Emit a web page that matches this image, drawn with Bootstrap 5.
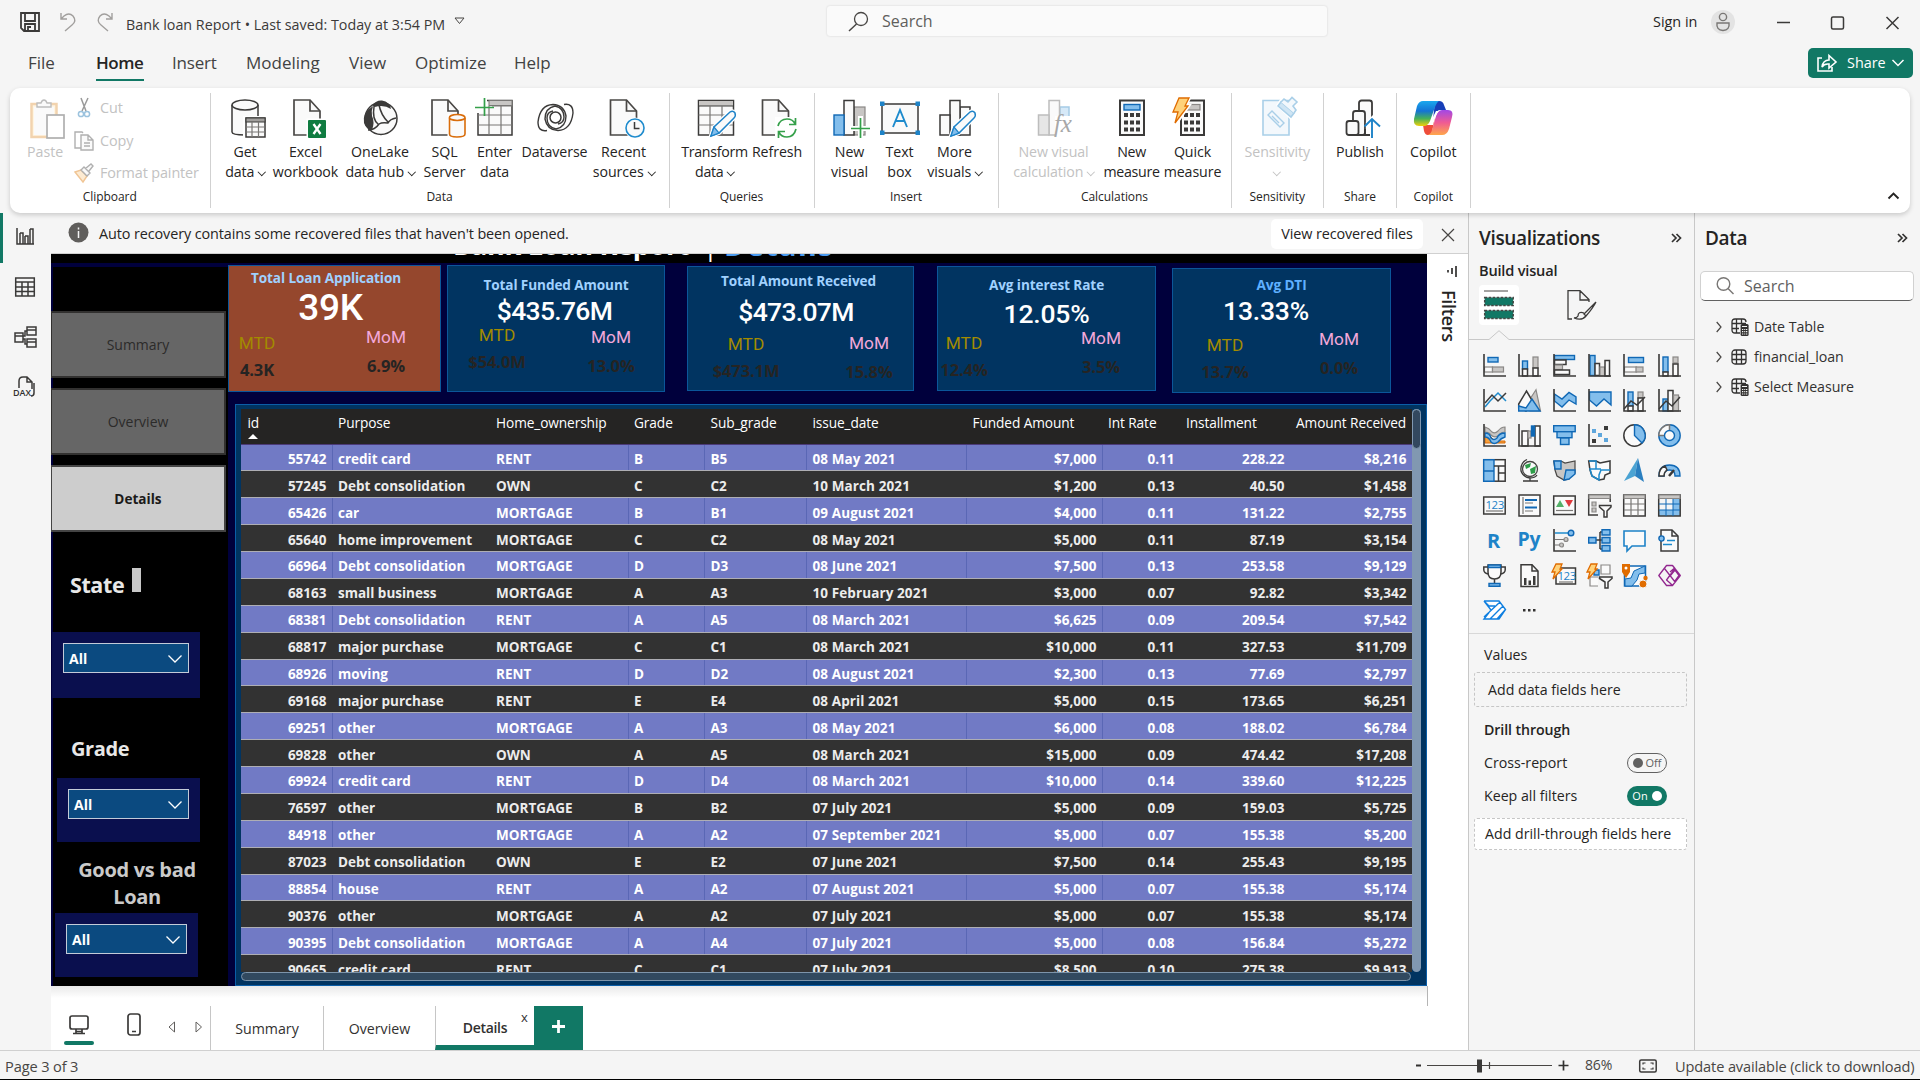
<!DOCTYPE html>
<html lang="en">
<head>
<meta charset="utf-8">
<meta name="viewport" content="width=device-width, initial-scale=1">
<title>Bank loan Report</title>
<link href="https://cdn.jsdelivr.net/npm/bootstrap@5.3.0/dist/css/bootstrap.min.css" rel="stylesheet">
<style>
:root{--green:#117865;--ink:#252423;--rule:#c8c8c8}
body{width:1920px;height:1080px;overflow:hidden;background:#f5f5f5;color:var(--ink);font-family:"Open Sans","Noto Sans",sans-serif;font-size:14.4px;line-height:20px;white-space:nowrap}
svg{display:block;overflow:visible;flex:none}
/* icon strokes and fills */
.k{fill:none;stroke:#3b3a39;stroke-width:1.5}
.w{fill:#fafafa;stroke:#3b3a39;stroke-width:1.5}
.b{fill:#83beec;stroke:#1068b5;stroke-width:1.4}
.bl{fill:none;stroke:#1e8bcd;stroke-width:1.5}
.g{fill:#c8c6c4;stroke:#8a8886;stroke-width:1.2}
.gl{fill:none;stroke:#797775;stroke-width:1.2}
.wg{fill:#fafafa;stroke:#8a8886;stroke-width:1.2}
.gr{fill:none;stroke:#35a04a;stroke-width:1.7}
.or{fill:#fafafa;stroke:#d96d0b;stroke-width:1.6}
.bolt{fill:#ffd27a;stroke:#e06c00;stroke-width:1.3}
.dk{fill:#3b3a39}
/* title bar */
.titlebar{height:44px}
.tb-left{width:827px;padding-left:20px}
.tb-search{width:500px;height:30px;margin-top:6px;background:#fafafa;border-radius:3px;box-shadow:0 0 2px #cfcfcf;color:#605e5c;font-size:16px;padding-left:21px}
.doc-title{font-size:14.3px;margin-left:12px;margin-top:5px;color:#3b3a39}
.avatar{width:24px;height:24px;background:#e3e3e3}
.menubar{height:44px;font-size:17px;color:#424242}
.menubar .nav-link{padding:0;color:#424242;line-height:24px;height:36px;margin-top:7px}
.menubar .nav-link.active{color:var(--ink);font-weight:600;border-bottom:2.5px solid var(--green);letter-spacing:-.45px;height:29.5px}
.share{background:var(--green);width:105px;height:30px;margin:4px 7px 0 auto;border-radius:5px;font-size:14.4px}
/* ribbon */
.ribbon{height:125px;margin:0 10px;background:#fff;border-radius:10px;box-shadow:0 2px 5px rgba(0,0,0,.18);position:relative;z-index:2}
.rgroup{border-right:1.5px solid #d1d1d1;margin:5px 0;height:115px}
.rgroup .gname{font-size:12px;line-height:16px;letter-spacing:-.05px}
.rbtns{display:grid;justify-items:center;height:96px;padding-top:5px}
.rbtns>div{text-align:center;font-size:14.2px;line-height:20px;letter-spacing:-.08px;color:var(--ink)}
.rbtns svg.ico{margin:0 auto 4px}
.off,.rbtns>div.off{color:#c2c2c2}
.cv{display:inline-block;width:5.500px;height:5.500px;border:solid currentColor;border-width:0 1.6px 1.6px 0;transform:translateY(-1px) rotate(45deg);margin-left:5px;vertical-align:middle}
.cols-data{grid-template-columns:69px 52px 97px 32px 68px 52px 86px}
.cols-q{grid-template-columns:90px 35px}
.cols-q>div:first-child,.cols-c>div:nth-child(2){letter-spacing:-.3px}
.cols-i{grid-template-columns:70px 30px 80px}
.cols-c{grid-template-columns:110px 46px 76px}
.w-clip{width:200.5px}.w-data{width:459px}.w-q{width:145px}.w-i{width:184px}.w-c{width:233px}.w-s{width:92.5px}.w-p{width:73px}.w-co{width:73.5px}
.clip-items div{height:32.5px;gap:6px;letter-spacing:-.12px}
/* left rail */
.rail{width:51px}
.rail div{height:50px;padding:0 1px 3px 0}
.rail div.active{border-left:3px solid var(--green);padding:0 4px 3px 0}
.notice{height:41px;border-bottom:1px solid #d0d0d0;font-size:14.4px;letter-spacing:-.1px;padding-top:1px}
.btn-view{background:#fff;border-radius:5px;height:30px;width:152px}
/* report canvas */
.canvas{width:1376px;height:732px;background:#00003c;overflow:hidden}
.report-title{height:9px;background:#000;color:#fff;font-weight:700;font-size:27px;line-height:37px;padding-left:402px;letter-spacing:-.25px}
.side{width:175px;margin:4px 6px 0 2px;background:#000;height:719px}
.navbtn{width:175px;height:67px;background:#666;border:2px solid #323130;border-left-width:1px;margin-left:-2px;color:#2c2b2a;font-size:14px}
.navbtn.cur{background:#cdcdcd;color:#1b1a19;font-weight:700;font-size:13.6px;border-color:#444}
.slabel{color:#e8e8e8;font-weight:700;font-size:20px;line-height:27px;letter-spacing:-.4px}
.slicer{background:#0a0f4e;padding:11px}
.slicer div{height:30px;background:#0b4a80;border:1.5px solid #c3cbd8;color:#fff;font-weight:700;font-size:14px;padding:1px 6px 0 5px}
.cursor-block{width:9px;height:24px;background:#c8c8c8}
.kpi{background:#013461;border:1.5px solid #0b5699;color:var(--ink);height:125px}
.kpi .t{color:#a0d1ff;font-weight:700;font-size:13.6px;line-height:18px;letter-spacing:-.1px;text-align:center}
.kpi .v{color:#fff;font-family:Roboto,sans-serif;font-weight:500;font-size:26.5px;line-height:32px;text-align:center;letter-spacing:-.2px}
.kpi .c{width:70px;text-align:center;font-weight:600}
.kpi .c span{display:block;font-family:Roboto,sans-serif;font-weight:400;font-size:17.3px;line-height:20px}
.kpi .c b{display:block;font-weight:700;font-size:16.5px;line-height:20px;letter-spacing:-.1px}
.mtd span{color:#a38b00}.mtd b{margin-top:7px}
.mom span{color:#f3a8d9}.mom b{margin-top:9px}
.k1{width:213px;height:127px;margin-top:2px;background:#95472d}
.k1 .t{padding:3px 17px 0 0}.k1 .v{font-size:37px;line-height:40px;padding:1px 8px 0 0;letter-spacing:-.3px}
.k1 .mtd{margin:5px 0 0 -7px}.k1 .mom{margin:-1px 19px 0 auto}
.k2{width:218px;height:127px;margin:2px 0 0 6px}
.k2 .t{padding-top:10px}.k2 .v{padding-top:1px;padding-right:3px}
.k2 .mtd{margin:-2.5px 0 0 14px}.k2 .mom{margin:0 18px 0 auto}
.k3{width:227px;margin:3px 0 0 22px}
.k3 .t{padding:5px 4px 0 0}.k3 .v{padding-top:5.500px;padding-right:9px}
.k2 .v,.k3 .v{letter-spacing:-.7px}
.k3 .mtd{margin:6px 0 0 23px}.k3 .mom{margin:5px 9px 0 auto}
.k4{width:219px;margin:3px 0 0 23px}
.k4 .t{padding-top:9px}.k4 .v{padding-top:3.500px}
.k4 .mtd{margin:3px 0 0 -9px}.k4 .mom{margin:-2px 19px 0 auto}
.k5{width:219px;margin:5px 0 0 16px}
.k5 .t{padding-top:7px;color:#5fb0ff}.k5 .v{padding-top:.5px;padding-right:31px}
.k5 .mtd{margin:8px 0 0 17px}.k5 .mom{margin:2px 16px 0 auto}
.kpis{height:141px}
.grid-visual{width:1192px;height:582px;margin-left:1px;background:#013461;border:1.5px solid #0b5ea8;padding:3.5px 0 0 5px}
.tclip{width:1170.5px;height:563px;overflow:hidden}
.loans{table-layout:fixed;width:1170.5px;border-collapse:separate;border-spacing:0;font-size:13.5px;font-weight:700;color:#fff}
.loans th{height:36px;background:#252423;font-weight:400;font-size:13.7px;vertical-align:top;padding:4px 0 0 6.500px;line-height:20px;border-bottom:1.5px solid #4b3a78;letter-spacing:-.1px}
.loans td{height:26.89px;padding:3px 5px 0 6.500px;line-height:20px;vertical-align:middle;border-bottom:1.5px solid #aeaeb4}
.loans tr:nth-child(odd) td{background:#717ac5}
.loans tr:nth-child(even) td{background:#323232;color:#ececec}
.loans tr:nth-child(odd) td:not(:nth-child(3)):not(:nth-child(10)):not(:nth-child(9)){box-shadow:inset 1px 0 #5a67b5}
.loans td:first-child{box-shadow:none!important}
.loans .n{text-align:right}
.loans td:nth-child(6){letter-spacing:.1px}
.sort{width:0;border:5px solid transparent;border-top:0;border-bottom:5px solid #fff;margin-top:1px}
.vbar{width:9.5px;height:563px;background:#8198b1;border-radius:5px}
.vbar div{height:40px;border-radius:5px;background:#33485f;border:1px solid #8198b1}
.hbar{width:1170px;height:9.5px;background:#31495f;border:1px solid #7d94aa;border-radius:5px}
/* page tabs */
.below{height:64px}
.shade{height:20px;width:1377px;background:linear-gradient(#e9e9e9,#fff 60%);border-right:1px solid #b5b5b5}
.ptabs{height:44px}
.ptab{border-left:1.5px solid #c6c6c6;font-size:14.2px;color:#323130;padding:1px 0 0 1px}
.ptab.cur{border-bottom:5px solid var(--green);padding-top:5px;font-weight:600;letter-spacing:-.3px;font-size:14px}
.filters{width:41px;background:#fff}
.filters .fl{writing-mode:vertical-rl;font-weight:600;font-size:18.3px;line-height:22px;letter-spacing:-.4px}
/* panes */
.viz{width:226px;border-left:1px solid var(--rule)}
.data-pane{width:226px;border-left:1px solid var(--rule)}
.pane-h{font-weight:600;font-size:19px;line-height:26px;letter-spacing:-.35px}
.sub-h{font-weight:600;font-size:14.6px;letter-spacing:-.2px}
.vgrid{display:grid;grid-template-columns:repeat(6,23px);gap:12px;padding:14px 0 0 14px;height:293px;align-content:start}
.drop{width:213px;margin-left:5px;border:1px dashed #c6c6c6;border-radius:3px;font-size:14.2px}
.tog{width:40px;height:20px;border-radius:10px;font-size:11px;margin-right:27px}
.tog i{width:10px;height:10px;border-radius:50%}
.dsearch{width:214px;height:30px;margin:20px 0 11px 5px;background:#fff;border:1px solid #d1d1d1;border-bottom:1.5px solid #616161;border-radius:5px;color:#616161;font-size:16px;padding-left:15px;gap:10px}
.trow{height:30px;padding-left:21px;font-size:14.2px;color:#323130;letter-spacing:-.05px}
.trow .nm{margin-left:5px}
.status{height:29px;border-top:1px solid #d0d0d0;font-size:14.6px;color:#484644;letter-spacing:-.13px}
.bottomline{height:1px;background:#000}
</style>
</head>
<body class="d-flex flex-column">
<svg width="0" height="0" class="position-absolute">
 <symbol id="doc" viewBox="0 0 40 40" overflow="visible"><path d="M1 2H17L27 13V37H1Z" fill="#fafafa" stroke="#4a4846" stroke-width="1.7"/><path d="M17 2V13H27" fill="none" stroke="#4a4846" stroke-width="1.7"/></symbol>
 <symbol id="pencil" viewBox="0 0 40 40" overflow="visible"><path d="M16 38L19 29L35 14Q39 12 40 16Q41 18 39 20L24 35Z" fill="#fff" stroke="#fff" stroke-width="4"/><path d="M16 38L19 29L35 14Q38 12 40 15Q41 18 39 20L24 35Z" fill="#fafafa" stroke="#1e83c8" stroke-width="1.5"/><path d="M16 38L19 29L24 35Z" fill="#83beec" stroke="#1e83c8" stroke-width="1.2"/></symbol>
 <symbol id="ax" viewBox="0 0 23 23" overflow="visible"><path d="M1 0V22H23" fill="none" stroke="#3b3a39" stroke-width="1.6"/></symbol>
 <symbol id="collapse" viewBox="0 0 10 10" overflow="visible"><path d="M0 1L4 5L0 9M4.500 1L8.500 5L4.500 9" fill="none" stroke="#323130" stroke-width="1.7"/></symbol>
 <symbol id="chev" viewBox="0 0 14 8" overflow="visible"><path d="M.5 .5L7 7L13.500 .5" fill="none" stroke="#fff" stroke-width="1.300"/></symbol>
 <symbol id="expand" viewBox="0 0 15 10" overflow="visible"><path d="M.7 0L5 5L.7 10" fill="none" stroke="#484644" stroke-width="1.200"/></symbol>
 <symbol id="tbl" viewBox="0 0 18 18" overflow="visible"><rect x="1" y="1" width="14" height="14" rx="3" fill="none" stroke="#323130" stroke-width="1.3"/><path d="M5.500 1V15M10.500 1V15M1 5.500H15M1 10.500H15" stroke="#323130" stroke-width="1.3"/></symbol>
 <symbol id="tblc" viewBox="0 0 18 18" overflow="visible"><path d="M9 15H4Q1 15 1 12V4Q1 1 4 1H12Q15 1 15 4M5.500 1V15M10.500 1V6M1 5.500H15M1 10.500H8" fill="none" stroke="#323130" stroke-width="1.3"/><rect x="9.600" y="6" width="8" height="12" rx="1.500" fill="#323130"/><path d="M11 8.500H16M11 11.500H12.300M13.200 11.500H14.300M15 11.500H16.300M11 13.700H12.300M13.200 13.700H14.300M15 13.700H16.300M11 16H12.300M13.200 16H14.300M15 16H16.300" stroke="#f5f5f5" stroke-width="1.200"/></symbol>
</svg>

<header class="titlebar d-flex">
 <div class="tb-left d-flex align-items-center">
  <svg width="20" height="20" viewBox="0 0 20 20" style="margin-top:-1px"><path class="k" style="stroke-width:1.8" d="M1 1H19V19H4L1 16ZM5 1V9H15V1M5 19V12H15V19M8 19V15H11"/></svg>
  <svg style="margin-left:18px" width="19" height="20" viewBox="0 0 19 20"><path d="M5 1V7H11M5 7L8 4Q13 0 17 4Q21 9 16 13L9 19" transform="translate(-2 0)" fill="none" stroke="#a19f9d" stroke-width="1.4"/></svg>
  <svg style="margin-left:18px" width="19" height="20" viewBox="0 0 19 20"><path d="M15 1V7H9M15 7L12 4Q7 0 3 4Q-1 9 4 13L11 19" transform="translate(2 0)" fill="none" stroke="#a19f9d" stroke-width="1.4"/></svg>
  <div class="doc-title">Bank loan Report • Last saved: Today at 3:54 PM</div>
  <svg style="margin:-3px 0 0 9px" width="11" height="8" viewBox="0 0 11 8"><path d="M1 1H10L5.500 6.500Z" fill="none" stroke="#484644"/></svg>
 </div>
 <div class="tb-search d-flex align-items-center">
  <svg width="21" height="21" viewBox="0 0 21 21"><circle cx="13" cy="8" r="6.500" fill="none" stroke="#484644" stroke-width="1.300"/><path d="M8.500 13L1 20" stroke="#484644" stroke-width="1.500"/></svg>
  <span style="margin-left:13px">Search</span>
 </div>
 <div class="d-flex align-items-center flex-fill" style="padding-left:326px">
  <span style="width:58px">Sign in</span>
  <span class="avatar rounded-circle d-flex justify-content-center align-items-center"><svg width="16" height="20" viewBox="0 0 16 20"><circle class="gl" cx="8" cy="5" r="3.600" style="stroke-width:1.400"/><path class="gl" style="stroke-width:1.400" d="M2 11H14Q15 18 8 18.500Q1 18 2 11Z"/></svg></span>
  <svg style="margin-left:42px" width="122" height="14" viewBox="0 0 122 14"><path class="k" d="M0 7.500H13"/><rect class="k" x="54.500" y="2" width="12" height="12" rx="1.500"/><path class="k" d="M109.500 2L121.500 14M121.500 2L109.500 14"/></svg>
 </div>
</header>

<nav class="menubar nav d-flex flex-nowrap">
 <a class="nav-link" style="margin-left:28px;width:68px">File</a><a class="nav-link active" style="width:48px">Home</a>
 <a class="nav-link" style="margin-left:28px;width:74px;letter-spacing:-.2px">Insert</a><a class="nav-link" style="width:103px">Modeling</a><a class="nav-link" style="width:66px">View</a><a class="nav-link" style="width:99px">Optimize</a><a class="nav-link">Help</a>
 <div class="share text-white d-flex align-items-center">
  <svg style="margin:0 10px 0 9px" width="20" height="18" viewBox="0 0 20 18"><path d="M5 4H1V17H15V13M5 13Q6 6 12 6V1.500L19 8L12 14V10Q7 9.500 5 13Z" fill="none" stroke="#fff" stroke-width="1.600"/></svg>Share
  <svg style="margin-left:6px" width="12" height="8" viewBox="0 0 12 8"><path d="M.5 1L6 6.500L11.500 1" fill="none" stroke="#fff" stroke-width="1.500"/></svg>
 </div>
</nav>

<section class="ribbon d-flex">
 <div class="rgroup w-clip">
  <div class="d-flex" style="height:96px">
   <div class="off" style="width:62px;padding:4px 0 0 17px;font-size:14.2px">
    <svg width="38" height="42" viewBox="0 0 38 42" style="margin-bottom:3px"><rect x="4.500" y="7" width="25" height="33" fill="#fff5e2" stroke="#f2d3ae" stroke-width="2.500"/><rect x="7" y="10" width="20" height="28" fill="#fafafa"/><path d="M10 10V6H14Q15 3 17 3Q19 3 20 6H24V10Z" fill="#fafafa" stroke="#bdbdbd" stroke-width="1.400"/><rect x="20" y="18" width="17" height="23" fill="#fff" stroke="#b0b0b0" stroke-width="1.700"/></svg>
    Paste</div>
   <div class="clip-items off flex-fill" style="padding-left:2px;margin-top:-1px">
    <div class="d-flex align-items-center"><svg width="20" height="20" viewBox="0 0 20 20"><path d="M7 0L12 13M14 0L8 13" stroke="#9a9a9a" stroke-width="1.500"/><circle cx="7" cy="16" r="2.600" fill="none" stroke="#9cc3de" stroke-width="1.500"/><circle cx="13" cy="16" r="2.600" fill="none" stroke="#9cc3de" stroke-width="1.500"/></svg>Cut</div>
    <div class="d-flex align-items-center"><svg width="20" height="20" viewBox="0 0 20 20"><path d="M7 17H1V1H8L9 2" fill="none" stroke="#b0b0b0" stroke-width="1.400"/><path d="M7 4H14L19 9V19H7ZM14 4V9H19M10 12H16M10 15H16" fill="#fafafa" stroke="#b0b0b0" stroke-width="1.400"/></svg>Copy</div>
    <div class="d-flex align-items-center"><svg width="20" height="20" viewBox="0 0 20 20"><path d="M1 9L7 7L13 13L9 19Z" fill="#fdebd2" stroke="#f0c595" stroke-width="1.400"/><path d="M7 7L10 4L16 10L13 13ZM11.500 5.500L17 1L19 3L15 8" fill="#fafafa" stroke="#b0b0b0" stroke-width="1.400"/></svg>Format painter</div>
   </div>
  </div>
  <div class="gname text-center">Clipboard</div>
 </div>

 <div class="rgroup w-data">
  <div class="rbtns cols-data">
   <div><svg class="ico" width="40" height="40" viewBox="0 0 40 40"><path class="w" d="M7 7V34Q7 37 20 37L33 34V7"/><ellipse class="w" cx="20" cy="7" rx="13" ry="5"/><rect x="18" y="18" width="24" height="22" fill="#fff"/><rect class="w" x="21" y="20" width="19" height="19"/><rect x="21" y="20" width="19" height="4" fill="#a19f9d" stroke="#3b3a39"/><path class="gl" d="M21 29H40M21 34H40M27 24V39M33.500 24V39"/></svg>Get<br>data<i class="cv"></i></div>
   <div><svg class="ico" width="40" height="40" viewBox="0 0 40 40"><use href="#doc" x="7" width="40" height="40"/><rect x="20.500" y="20.500" width="20" height="20" fill="#fff"/><rect x="22" y="22" width="18" height="18" rx="1" fill="#107c41"/><path d="M27.500 26L34.500 36M34.500 26L27.500 36" stroke="#fff" stroke-width="2.300"/></svg>Excel<br>workbook</div>
   <div><svg class="ico" width="40" height="40" viewBox="0 0 40 40"><circle cx="21" cy="20.500" r="16" fill="#fafafa" stroke="#3b3a39" stroke-width="1.500"/><path class="dk" d="M13 7Q16 2 22 2.500Q30 4 31 11Q24 6 14 9ZM13 8Q2 15 4 25Q6 31 12 32Q15 24 12 18Q11 13 13 8Z"/><path class="k" d="M14 9Q12 21 18 26M19 7Q21 17 28 24M8 32Q15 32 19 26Q22 24 28 25Q30 21 36 20M13 8L19 7"/></svg>OneLake<br>data hub<i class="cv"></i></div>
   <div><svg class="ico" width="40" height="40" viewBox="0 0 40 40"><use href="#doc" x="6" width="40" height="40"/><path fill="#fff" d="M22.500 16H42V41H22.500Z"/><path class="or" d="M24.500 20V36Q24.500 39 32 39Q40 39 40 36V20"/><ellipse class="or" cx="32.200" cy="19.500" rx="7.800" ry="3"/></svg>SQL<br>Server</div>
   <div><svg class="ico" width="40" height="40" viewBox="0 0 40 40"><rect class="w" x="3" y="2.500" width="34" height="34.500"/><rect x="14" y="2.500" width="23" height="5" fill="#c8c6c4" stroke="#797775"/><path class="gl" d="M3 17H37M3 27H37M14 8V37M26 8V37M17 8H37"/><path d="M0 0H12V15H0Z" fill="#fff"/><path class="gr" d="M9.500 0V18M0 9.500H19"/></svg>Enter<br>data</div>
   <div><svg class="ico" width="40" height="40" viewBox="0 0 40 40"><g id="swirl"><path class="k" style="stroke-width:1.400" d="M12 32.500Q3 34 3 24Q5 7 18 6.500Q29 7 31 18Q31 29 21 31Q12 29 12 20Q12 14 18 13"/></g><use href="#swirl" transform="rotate(180 20.500 19.500)"/><circle class="k" cx="20.500" cy="19.500" r="5.500"/></svg>Dataverse</div>
   <div><svg class="ico" width="40" height="40" viewBox="0 0 40 40"><use href="#doc" x="6.500" width="40" height="40"/><circle cx="32" cy="30" r="10.500" fill="#fff"/><circle cx="32" cy="30" r="9" fill="#fafafa" stroke="#1e8bcd" stroke-width="1.600"/><path class="k" d="M31.500 24V30.500H36.500"/></svg>Recent<br>sources<i class="cv"></i></div>
  </div>
  <div class="gname text-center">Data</div>
 </div>

 <div class="rgroup w-q">
  <div class="rbtns cols-q">
   <div><svg class="ico" width="40" height="40" viewBox="0 0 40 40"><rect class="w" x="3.500" y="2.500" width="35" height="34.500"/><rect x="3.500" y="2.500" width="35" height="5.500" fill="#c8c6c4" stroke="#3b3a39"/><path class="gl" d="M3.500 17H38M3.500 27H38M15 8V37M27 8V37"/><use href="#pencil" width="40" height="40"/></svg>Transform<br>data<i class="cv"></i></div>
   <div><svg class="ico" width="40" height="40" viewBox="0 0 40 40"><use href="#doc" x="4.500" width="40" height="40"/><path d="M18 19H42V42H18Z" fill="#fff"/><path class="gr" d="M21 28Q23 21 30 21Q36 21 38 26M38.500 20V26.500H32M39 31Q37 39 30 39Q24 39 22 34M21.500 40V33.500H28"/></svg>Refresh</div>
  </div>
  <div class="gname text-center">Queries</div>
 </div>

 <div class="rgroup w-i">
  <div class="rbtns cols-i">
   <div><svg class="ico" width="40" height="40" viewBox="0 0 40 40"><rect class="g" x="24" y="9" width="11" height="28"/><rect class="w" x="14" y="2.500" width="10" height="34.500"/><rect class="b" x="4" y="17" width="10" height="20"/><path d="M30.500 18V40M20 30.500H40" stroke="#fff" stroke-width="5"/><path class="gr" d="M30.500 20V40M21 30.500H40"/></svg>New<br>visual</div>
   <div><svg class="ico" width="40" height="40" viewBox="0 0 40 40"><rect class="w" x="2" y="6" width="36" height="29"/><path d="M0 3.500H4.500V8H0ZM35.500 3.500H40V8H35.500ZM0 32.500H4.500V37H0ZM35.500 32.500H40V37H35.500Z" fill="#1e83c8"/><path class="bl" style="stroke-width:1.900" d="M13 29L20 12L27 29M15.500 23H24.500"/></svg>Text<br>box</div>
   <div><svg class="ico" width="40" height="40" viewBox="0 0 40 40"><rect class="w" x="26" y="9" width="10" height="28"/><rect class="w" x="16" y="2.500" width="10" height="34.500"/><rect class="w" x="6" y="17" width="10" height="20"/><use href="#pencil" x="1" width="40" height="40"/></svg>More<br>visuals<i class="cv"></i></div>
  </div>
  <div class="gname text-center">Insert</div>
 </div>

 <div class="rgroup w-c">
  <div class="rbtns cols-c">
   <div class="off"><svg class="ico" width="40" height="40" viewBox="0 0 40 40"><g stroke-width="1.500" stroke="#bdbdbd"><rect x="26" y="9" width="9" height="28" fill="#d6e9f8" stroke="#a5cbe6"/><rect x="15" y="2.500" width="10.500" height="34.500" fill="#fafafa"/><rect x="4.500" y="17" width="10.500" height="20" fill="#e6e6e6"/></g><path d="M21 18H42V40H21Z" fill="#fff"/><text x="20" y="34" font-family="Liberation Serif,serif" font-style="italic" font-size="25" fill="#a8a8a8">fx</text></svg>New visual<br>calculation<i class="cv"></i></div>
   <div><svg class="ico" width="40" height="40" viewBox="0 0 40 40"><rect class="w" x="8" y="2.500" width="24" height="34.500" style="stroke-width:2"/><rect class="b" x="12" y="6.500" width="16" height="5.500"/><path d="M12 17H28M12 24.500H28M12 31.500H28" stroke="#3b3a39" stroke-width="4" stroke-dasharray="4 2"/></svg>New<br>measure</div>
   <div><svg class="ico" width="40" height="40" viewBox="0 0 40 40"><rect class="w" x="8" y="2.500" width="23" height="34.500" style="stroke-width:2"/><rect class="g" x="14" y="6.500" width="13" height="5.500"/><path d="M11 17H27M11 24.500H27M11 31.500H27" stroke="#3b3a39" stroke-width="4" stroke-dasharray="4 2"/><path d="M6 0H16L12 8H15L3 25L5 14H0Z" fill="#fff" stroke="#fff" stroke-width="4"/><path class="bolt" d="M6 0H16L12 8H15L2 25L5 14H0Z"/></svg>Quick<br>measure</div>
  </div>
  <div class="gname text-center">Calculations</div>
 </div>

 <div class="rgroup w-s">
  <div class="rbtns"><div class="off"><svg class="ico" width="40" height="40" viewBox="0 0 40 40"><g fill="#f3f8fc" stroke="#a9cfe8" stroke-width="1.600"><path d="M6 2.500H32V37H6Z"/><path d="M11 17L15 13L27 25L23 29ZM15 18L22 25" stroke-width="1.400"/><path d="M21 7L25 1L38 13L33 19Z" fill="#fff" stroke="#fff" stroke-width="3"/><path fill="#cfe5f4" d="M21 8L24 4L37 15L34 19Z"/><path d="M24 4L27 1L31 4L35 -.5L40 4L36 8L39 12L37 15"/></g></svg>Sensitivity<br><i class="cv m-0"></i></div></div>
  <div class="gname text-center">Sensitivity</div>
 </div>
 <div class="rgroup w-p">
  <div class="rbtns"><div><svg class="ico" width="40" height="40" viewBox="0 0 40 40"><g class="w" style="stroke-width:1.800"><rect x="19" y="2.500" width="13" height="34.500" rx="2.500"/><rect x="13" y="13" width="12" height="24" rx="2.500"/><rect x="6.500" y="23" width="12" height="14" rx="2.500"/></g><path d="M25.900 38V24L33 17V38Z" fill="#fff"/><path d="M32 40V21M24.500 28.500L32 21L40 28.500" fill="none" stroke="#1e83c8" stroke-width="1.900"/><path class="k" style="stroke-width:1.800" d="M25 31V37H18M25 37H30"/></svg>Publish</div></div>
  <div class="gname text-center">Share</div>
 </div>
 <div class="rgroup w-co">
  <div class="rbtns"><div><svg class="ico" width="40" height="40" viewBox="0 0 40 40"><defs><linearGradient id="ca" x1="0" y1="0" x2="0" y2="1"><stop offset="0" stop-color="#1aa8ee"/><stop offset=".4" stop-color="#1473d4"/><stop offset=".7" stop-color="#45b05a"/><stop offset="1" stop-color="#f1d00a"/></linearGradient><linearGradient id="cb" x1="0" y1="0" x2="0" y2="1"><stop offset="0" stop-color="#a148e6"/><stop offset=".5" stop-color="#ef5a94"/><stop offset="1" stop-color="#ffa64a"/></linearGradient></defs><path d="M22 3H26Q30 3 31 7L33 12H27Q24 12 22 17L20 22Z" fill="#173fb8"/><path d="M10 27H18L22 20L19 34Q18 37 15 37Q12 37 11 33Z" fill="#ee4d3a"/><path d="M10 3H26Q24 4 22 9L17 23Q15 28 11 28H6Q0 28 1 21L4 8Q6 3 10 3Z" fill="url(#ca)"/><path d="M29 12H35Q41 12 39 19L36 31Q34 37 29 37H15Q18 36 19 32L23 18Q25 12 29 12Z" fill="url(#cb)"/><path d="M23 13H26Q23 16 22 20L20 27H14Q17 26 18 23Z" fill="#fff"/></svg>Copilot</div></div>
  <div class="gname text-center">Copilot</div>
 </div>
 <svg style="margin:104px 11px 0 auto" width="11" height="7" viewBox="0 0 11 7"><path d="M.5 6.500L5.500 1.500L10.500 6.500" fill="none" stroke="#252423" stroke-width="1.900"/></svg>
</section>

<main class="d-flex flex-fill" style="height:837px">
 <aside class="rail">
  <div class="active d-flex align-items-center justify-content-center"><svg width="18" height="17" viewBox="0 0 18 17"><path class="k" d="M1 0V16H18M4 5H7V16M4 5V16M9 8H12V16M9 8V16M14 1H17V16M14 1V16"/></svg></div>
  <div class="d-flex align-items-center justify-content-center"><svg width="20" height="20" viewBox="0 0 20 20"><path class="k" d="M.7 1H19.300V19H.7ZM.7 5H19.300M.7 10H19.300M.7 14.500H19.300M7 5V19M13 5V19"/></svg></div>
  <div class="d-flex align-items-center justify-content-center"><svg width="23" height="22" viewBox="0 0 23 22"><path class="k" d="M1 7H9V16H1ZM1 10H9M13 1H22V9H13ZM13 4H22M13 13H22V21H13ZM13 16H22M9 10H11V5H13M9 13H11V18H13"/></svg></div>
  <div class="d-flex align-items-center justify-content-center"><svg width="22" height="22" viewBox="0 0 22 22"><path class="k" d="M5 12V5Q5 1 9 1H13L18 6V13M13 1V6H18M20 7V17Q20 20 17 20"/><text x="-1" y="20" font-size="9" font-weight="600" fill="#323130">DAX</text></svg></div>
 </aside>

 <section class="d-flex flex-column" style="width:1417px">
  <div class="notice d-flex align-items-center">
   <svg style="margin:-2px 7px 0 17px" width="20" height="20" viewBox="0 0 20 20"><circle cx="10.500" cy="9.500" r="10" fill="#605e5c"/><path d="M10.500 8V15M10.500 4.500V6.500" stroke="#f5f5f5" stroke-width="1.500"/></svg>
   <span class="ms-1">Auto recovery contains some recovered files that haven't been opened.</span>
   <span class="btn-view d-flex align-items-center justify-content-center ms-auto">View recovered files</span>
   <svg style="margin:3px 14px 0 19px" width="12" height="12" viewBox="0 0 12 12"><path d="M0 0L12 12M12 0L0 12" stroke="#484644" stroke-width="1.200"/></svg>
  </div>
  <div class="d-flex">
   <div class="canvas">
    <div class="report-title d-flex align-items-end overflow-hidden"><span style="width:250px">Bank Loan Report</span><span class="fw-normal" style="width:21px">|</span><span style="color:#4a9bf0;font-size:29px;letter-spacing:1.300px">Details</span></div>
    <div class="d-flex">
     <div class="side">
      <div class="navbtn d-flex align-items-center justify-content-center" style="margin-top:44px">Summary</div>
      <div class="navbtn d-flex align-items-center justify-content-center" style="margin-top:10px">Overview</div>
      <div class="navbtn cur d-flex align-items-center justify-content-center" style="margin-top:10px">Details</div>
      <div class="d-flex" style="padding:36px 0 0 17px"><div class="slabel" style="margin-top:3px;width:62px;font-size:21.500px">State</div><div class="cursor-block"></div></div>
      <div class="slicer" style="width:148px;height:66px;margin:34px 0 0 -1px"><div class="d-flex align-items-center justify-content-between">All<svg width="14" height="8"><use href="#chev"/></svg></div></div>
      <div class="slabel" style="margin:37px 0 0 18px">Grade</div>
      <div class="slicer" style="width:143px;height:64px;margin:16px 0 0 4px"><div class="d-flex align-items-center justify-content-between">All<svg width="14" height="8"><use href="#chev"/></svg></div></div>
      <div class="slabel text-center" style="margin:14px 7px 0 0;color:#cacaca;height:57px;letter-spacing:-.3px">Good vs bad<br>Loan</div>
      <div class="slicer" style="width:143px;height:64px;margin:0 0 0 2px"><div class="d-flex align-items-center justify-content-between">All<svg width="14" height="8"><use href="#chev"/></svg></div></div>
     </div>
     <div>
      <div class="kpis d-flex align-items-start" style="margin-left:-6px">
       <div class="kpi k1"><div class="t">Total Loan Application</div><div class="v">39K</div><div class="d-flex"><div class="c mtd"><span>MTD</span><b>4.3K</b></div><div class="c mom"><span>MoM</span><b>6.9%</b></div></div></div>
       <div class="kpi k2"><div class="t">Total Funded Amount</div><div class="v">$435.76M</div><div class="d-flex"><div class="c mtd"><span>MTD</span><b>$54.0M</b></div><div class="c mom"><span>MoM</span><b>13.0%</b></div></div></div>
       <div class="kpi k3"><div class="t">Total Amount Received</div><div class="v">$473.07M</div><div class="d-flex"><div class="c mtd"><span>MTD</span><b>$473.1M</b></div><div class="c mom"><span>MoM</span><b>15.8%</b></div></div></div>
       <div class="kpi k4"><div class="t">Avg interest Rate</div><div class="v">12.05%</div><div class="d-flex"><div class="c mtd"><span>MTD</span><b>12.4%</b></div><div class="c mom"><span>MoM</span><b>3.5%</b></div></div></div>
       <div class="kpi k5"><div class="t">Avg DTI</div><div class="v">13.33%</div><div class="d-flex"><div class="c mtd"><span>MTD</span><b>13.7%</b></div><div class="c mom"><span>MoM</span><b>0.0%</b></div></div></div>
      </div>
      <div class="grid-visual">
       <div class="d-flex">
        <div class="tclip">
         <table class="loans">
          <colgroup><col style="width:90.500px"><col style="width:158px"><col style="width:138px"><col style="width:76.500px"><col style="width:102px"><col style="width:160px"><col style="width:135.500px"><col style="width:78px"><col style="width:110px"><col></colgroup>
          <thead><tr><th>id<div class="sort"></div></th><th>Purpose</th><th>Home_ownership</th><th>Grade</th><th>Sub_grade</th><th>issue_date</th><th>Funded Amount</th><th>Int Rate</th><th>Installment</th><th>Amount Received</th></tr></thead>
          <tbody id="loanRows"></tbody>
         </table>
        </div>
        <div class="vbar"><div></div></div>
       </div>
       <div class="hbar"></div>
      </div>
     </div>
    </div>
   </div>
   <div class="filters d-flex flex-column align-items-start">
    <svg style="margin:12px 0 0 20px" width="10" height="11" viewBox="0 0 10 11"><path d="M9 0V11M5 2V8M1 4V6.500" stroke="#323130" stroke-width="1.700"/></svg>
    <div class="fl" style="margin:13px 0 0 11px">Filters</div>
   </div>
  </div>
  <div class="below bg-white">
   <div class="shade"></div>
   <div class="ptabs d-flex">
    <div class="d-flex" style="width:158.500px">
     <div style="margin:9px 0 0 13px;width:30px"><svg class="mx-auto" width="20" height="20" viewBox="0 0 20 20"><path class="k" style="stroke-width:1.700" d="M3 1H17Q19 1 19 3V12Q19 14 17 14H3Q1 14 1 12V3Q1 1 3 1ZM7 14V18M13 14V18M4 18.500H16M7 16.500H13"/></svg><div class="rounded" style="height:4px;margin-top:6px;background:var(--green)"></div></div>
     <svg style="margin:7px 0 0 33px" width="14" height="23" viewBox="0 0 14 23"><rect class="k" x="1" y="1" width="12" height="21" rx="2.500" style="stroke-width:1.700"/><path class="k" d="M5 18.500H9"/></svg>
     <svg style="margin:15px 0 0 27px" width="35" height="12" viewBox="0 0 35 12"><path d="M6.500 1V11L1 6ZM28 1V11L33.500 6Z" fill="none" stroke="#605e5c"/></svg>
    </div>
    <div class="ptab d-flex align-items-center justify-content-center" style="width:113px">Summary</div>
    <div class="ptab d-flex align-items-center justify-content-center" style="width:112px">Overview</div>
    <div class="ptab cur d-flex align-items-center justify-content-center position-relative" style="width:99px">Details<span class="position-absolute fw-normal" style="right:6px;top:1px;font-size:13px">x</span></div>
    <div class="d-flex align-items-center justify-content-center" style="width:49px;background:var(--green);padding-bottom:3px"><svg width="13" height="13" viewBox="0 0 14 14"><path d="M7 0V14M0 7H14" stroke="#fff" stroke-width="3"/></svg></div>
   </div>
  </div>
 </section>

 <aside class="viz">
  <div class="d-flex align-items-center justify-content-between" style="padding:12px 12px 0 10px"><span class="pane-h">Visualizations</span><svg width="10" height="10"><use href="#collapse"/></svg></div>
  <div class="sub-h" style="padding:9px 0 0 10px;height:34px">Build visual</div>
  <div class="d-flex" style="height:45px;padding-left:10px">
   <div class="bg-white d-flex align-items-center justify-content-center rounded-1" style="width:40px;height:40px"><svg width="30" height="30" viewBox="0 0 30 30"><path d="M0 1H24" stroke="#484644"/><g fill="#117865" stroke="#484644" stroke-width="1.500" stroke-dasharray="2.500 1.500"><rect x=".7" y="7.500" width="28.500" height="8"/><rect x=".7" y="20.500" width="28.500" height="8"/></g></svg></div>
   <svg style="margin:5px 0 0 48px" width="30" height="30" viewBox="0 0 30 30"><path class="k" style="stroke-width:1.300" d="M5 29H1V.7H13L22 9.500V12M13 .7V10H22M29 12L17 24L19 26Q26 18 29 12M17 23Q11 21 11 26Q10 28 7 28Q15 31 19 26"/></svg>
  </div>
  <svg width="225" height="10" viewBox="0 0 225 10"><path d="M0 9.500H20L30 .7L40 9.500H225" fill="none" stroke="#c8c8c8"/></svg>
  <div class="vgrid">
   <svg width="23" height="23"><rect class="b" x="5" y="3.500" width="10" height="4.500"/><rect class="wg" x="1.500" y="13" width="8" height="5"/><rect class="g" x="9.500" y="13" width="11" height="5"/><use href="#ax"/></svg>
   <svg width="23" height="23"><rect class="b" x="4.500" y="7" width="5" height="8"/><rect class="w" x="4.500" y="15" width="5" height="7"/><rect class="g" x="15" y="3" width="5" height="11"/><rect class="w" x="15" y="14" width="5" height="8"/><use href="#ax"/></svg>
   <svg width="23" height="23"><rect class="b" x="1.500" y="1.500" width="20" height="4"/><rect class="w" x="1.500" y="6" width="11.500" height="4.500"/><rect class="g" x="1.500" y="11" width="8" height="4.500"/><rect class="w" x="1.500" y="16" width="15" height="4.500"/><use href="#ax"/></svg>
   <svg width="23" height="23"><rect class="b" x="2" y="1.500" width="5" height="20"/><rect class="w" x="7" y="9.500" width="4.500" height="12"/><rect class="g" x="12" y="13" width="4.500" height="9"/><rect class="w" x="17" y="6.500" width="4.500" height="15.500"/><use href="#ax"/></svg>
   <svg width="23" height="23"><rect class="b" x="5.500" y="3.500" width="15" height="5"/><rect class="wg" x="1.500" y="13" width="12" height="5"/><rect class="g" x="13" y="13" width="7" height="5"/><use href="#ax"/></svg>
   <svg width="23" height="23"><rect class="b" x="5" y="3" width="5" height="15"/><rect class="w" x="5" y="18" width="5" height="4"/><rect class="g" x="15" y="3" width="5" height="6"/><rect class="w" x="15" y="10" width="5" height="12"/><use href="#ax"/></svg>

   <svg width="23" height="23"><path class="bl" d="M2 18L7 12L15 4L23 12"/><path class="k" d="M2 14L9 6L15 12L23 4"/><use href="#ax"/></svg>
   <svg width="23" height="23"><path class="g" d="M12 10L18 .7L22.500 22H12Z"/><path class="w" d="M.7 19V15L8.500 2L15 13L8 22Z"/><path class="b" d="M.7 22V17L8 19L14 10L22 22Z"/></svg>
   <svg width="23" height="23"><path class="b" d="M1.500 5L9 10L16 3.500L23 8V15L16 11L9 18L1.500 12Z"/><use href="#ax"/></svg>
   <svg width="23" height="23"><path class="b" d="M1.500 3H23V16L16 10L8.500 17L1.500 11Z"/><use href="#ax"/></svg>
   <svg width="23" height="23"><rect class="b" x="5" y="3" width="5" height="14"/><rect class="g" x="15" y="3" width="5" height="6"/><path class="w" d="M15 9H20V22H15ZM5 17H10V22H5Z"/><path class="k" d="M1 20L8 12L14 16L22 8"/><use href="#ax"/></svg>
   <svg width="23" height="23"><rect class="b" x="5" y="10" width="5" height="12"/><rect class="w" x="10" y="1.500" width="5" height="20.500"/><rect class="g" x="15.500" y="6" width="5" height="16"/><path class="k" d="M1 20L8 12L14 17L22 8"/><use href="#ax"/></svg>

   <svg width="23" height="23"><path d="M2 12H7L12 17H22V19H2Z" fill="#f7a13e" stroke="#d86b06"/><path class="g" d="M2 3Q6 4 9 8Q12 10 15 7Q18 3 22 3V8Q18 8 15 12Q11 14 8 11Q6 8 2 8Z"/><path class="b" d="M2 9Q7 9 8 14Q11 17 14 14Q16 9 22 9V13Q18 14 15 18Q11 21 8 18Q6 13 2 13Z"/><use href="#ax"/></svg>
   <svg width="23" height="23"><path class="w" d="M4 7H10V22H4ZM17 2H22V22H17Z"/><rect class="g" x="10" y="7" width="3" height="7"/><rect class="b" x="13.500" y="2" width="3" height="10" style="fill:#1068b5"/><use href="#ax"/></svg>
   <svg width="23" height="23"><rect class="b" x=".7" y="1.700" width="21.500" height="6"/><rect class="b" x="4" y="7.700" width="15" height="6"/><rect class="b" x="7.500" y="14" width="8.500" height="6.500"/></svg>
   <svg width="23" height="23"><use href="#ax"/><path class="dk" d="M16 2H20V6H16ZM4 15H8V19H4Z"/><path d="M4 5H8V9H4ZM10 9H14V13H10ZM16 14H20V18H16Z" fill="#5ea6dc"/></svg>
   <svg width="23" height="23"><circle class="w" cx="11.500" cy="11.500" r="10.700"/><path class="b" d="M11.500 .8A10.700 10.700 0 0 1 19 19L11.500 11.500Z"/></svg>
   <svg width="23" height="23"><circle class="b" cx="11.500" cy="11.500" r="10.700"/><path class="w" style="stroke:#797775" d="M.8 11.500A10.700 10.700 0 0 1 11.500 .8V11.500Z"/><circle cx="11.500" cy="11.500" r="5" fill="#fafafa" stroke="#1068b5" stroke-width="1.400"/></svg>

   <svg width="23" height="23"><rect class="w" x=".7" y=".7" width="21.500" height="21.500"/><path class="b" d="M.7 .7H11V22.300H.7ZM.7 12H11"/><path class="k" d="M11 7H22M15.500 7V22M15.500 14H22"/></svg>
   <svg width="23" height="23"><circle cx="12" cy="10" r="7.500" fill="#fafafa" stroke="#484644" stroke-width="1.300"/><path d="M7 6L13 4L12 8L8 10ZM12 10L18 7L17 14L13 15Z" fill="#2e9e49"/><path class="k" style="stroke-width:1.300" d="M9 .5Q2 4 3 12Q5 18 12 19Q17 19 19 16M12 19V22M5 22H20"/></svg>
   <svg width="23" height="23"><path class="g" style="stroke:#484644" d="M.7 2H8L12 4L22 2V14L17 16L16 20L11 21L4 17L2 11Z"/><path class="b" d="M1 2H8V10H2ZM13 11H22V15L16 20L11 21Z"/></svg>
   <svg width="23" height="23"><path class="w" d="M.7 2H8L12 4L22 2V14L17 16L16 20L11 21L4 17L2 11Z"/><path class="bl" d="M1 2H8V10H2L4 17L11 21V16L13 11H22M8 10H13"/></svg>
   <svg width="23" height="23"><path d="M15 -1L1 22L12 17Z" fill="#4ba3d3"/><path d="M15 -1L21 23L12 17Z" fill="#2a7fc0"/></svg>
   <svg width="23" height="23"><path class="b" d="M1 17Q1 6 11.500 6Q22 6 22 17H17Q17 11 11.500 11Q6 11 6 17Z"/><path class="w" d="M1 17Q1 9 7 7L9 11Q6 13 6 17Z"/><path class="k" style="stroke-width:2.500" d="M11 17L16 11"/></svg>

   <svg width="23" height="23"><rect class="w" x=".7" y="3" width="21.500" height="17"/><text x="2.500" y="14.500" font-size="11.500" letter-spacing="-.5" fill="#1e83c8">123</text><path class="gl" d="M3 17H20"/></svg>
   <svg width="23" height="23"><rect class="w" x="1" y="1" width="21" height="21"/><path class="gl" d="M5 3V20M7 9H15M7 17H15"/><path d="M7 6H19M7 13.500H19" stroke="#1068b5" stroke-width="2.200"/></svg>
   <svg width="23" height="23"><rect class="w" x=".7" y="2" width="21.500" height="18.500"/><path d="M3 13L7 6L11 13Z" fill="#54b068"/><path d="M12 6H20L16 13Z" fill="#e03a3e"/><path class="gl" d="M3 16.500H20"/></svg>
   <svg width="23" height="23"><rect class="w" x=".7" y="1" width="21.500" height="20"/><path class="g" d="M1 1H22V4.500H1ZM4 8H8V12H4ZM4 14H8V18H4Z"/><path d="M10 8H24V24H10Z" fill="#f5f5f5"/><path class="w" d="M11.500 11.500H23V13L19 17V23H16V17L11.500 13Z"/></svg>
   <svg width="23" height="23"><rect class="w" x=".7" y="1" width="21.500" height="21"/><path class="g" d="M1 1H22V4.500H1Z"/><path class="gl" d="M1 10H22M1 16H22M8 5V22M15 5V22"/></svg>
   <svg width="23" height="23"><path d="M15 5H22V22H1V16H15Z" fill="#83beec"/><rect class="k" x=".7" y="1" width="21.500" height="21"/><path class="g" d="M1 1H22V4.500H1Z"/><path d="M1 10H22M1 16H22M8 5V22M15 5V22" stroke="#1068b5"/></svg>

   <svg width="23" height="23"><text x="4" y="19" font-size="20" font-weight="700" fill="#1e83c8">R</text></svg>
   <svg width="23" height="23"><text x="-.5" y="17" font-size="19.500" font-weight="700" letter-spacing="-.3" fill="#1e83c8">Py</text></svg>
   <svg width="23" height="23"><use href="#ax"/><path class="bl" d="M2 4H16"/><path class="gl" d="M2 10.500H12M2 16H7"/><circle class="b" cx="18" cy="4" r="2.800"/><circle class="g" cx="13" cy="10.500" r="2"/><circle class="g" cx="8.500" cy="16" r="2"/></svg>
   <svg width="23" height="23"><path class="k" d="M8 11H14M12 3V20M12 3H14M12 20H14"/><path class="b" d="M.7 8.500H8V14H.7ZM14 .7H22V6H14ZM14 8.500H22V14H14ZM14 16.500H22V22H14Z"/></svg>
   <svg width="23" height="23"><path d="M1 2H22V17H9L4 22V17H1Z" fill="#fafafa" stroke="#1e83c8" stroke-width="1.600"/></svg>
   <svg width="23" height="23"><path class="w" d="M3 1H14L20 7V22H3Z"/><path class="k" d="M14 1V7H20"/><path class="bl" d="M9 11.500H17M5 15.500H14"/><circle class="b" cx="3.500" cy="9.500" r="2.600"/></svg>

   <svg width="23" height="23"><path class="w" d="M5 1H18V8Q18 15 11.500 15Q5 15 5 8ZM5 3H.8V6Q1 9 5 10M18 3H22.200V6Q22 9 18 10M11.500 15V19"/><path class="b" d="M5.500 1H17.500V3.500H5.500ZM6 19.500H17V22.300H6Z"/></svg>
   <svg width="23" height="23"><path class="w" d="M3 .8H14L20 7V22.500H3Z"/><path class="k" d="M14 .8V7H20"/><path class="dk" d="M6 14H8.500V21H6ZM10.500 16.500H13V21H10.500ZM15 12H17.500V21H15Z"/></svg>
   <svg width="23" height="23"><rect class="w" x="3" y="4" width="19.500" height="16"/><text x="4.500" y="16" font-size="11.500" letter-spacing="-.5" fill="#1e83c8">123</text><path class="gl" d="M6 18H20"/><path class="bolt" d="M3 0H9L7 5H9L0 15L2 8H-1Z"/></svg>
   <svg width="23" height="23"><path class="wg" d="M13 1H22V10H13ZM2 13H11V22H2Z"/><path d="M10 11H24V24H10Z" fill="#f5f5f5"/><path class="w" d="M11.500 13H24V14.500L20 18V24H17V18L11.500 14.500Z"/><path class="b" d="M6 6H11V11H6Z"/><path class="bolt" d="M3 0H9L7 5H9L0 15L2 8H-1Z"/></svg>
   <svg width="23" height="23"><rect class="w" x="1.500" y="2" width="21" height="20" style="stroke:#1068b5"/><path d="M22 2V9L16 10L14 16L9 22H2V15L8 14L11 7Z" fill="#83beec" stroke="#1068b5"/><path d="M-1 0H7V8L3 14L-1 8Z" fill="#e06c00"/><circle cx="3" cy="4" r="1.500" fill="#fff"/><circle cx="20" cy="20" r="4" fill="#e06c00" stroke="#f5f5f5"/><circle cx="22.500" cy="14" r="2.200" fill="#e06c00"/></svg>
   <svg width="23" height="23"><path d="M8.500 1.500H14.500L17 4.500L8.500 16L12 19L14.500 21.500H8.500L.8 11.500ZM14.500 1.500L22.300 11.500L14.500 21.500M6.500 4.500L17.500 18.500M12 8L16 4.500M12.500 11.500L17 6L21 11.500L17 17" fill="none" stroke="#92278f" stroke-width="1.300" stroke-linejoin="round"/></svg>

   <svg width="23" height="23" style="margin-top:1px"><path d="M1 1H16L22.500 9.500L16 19H1L8 10L1 1L6 6H12M1 17L17 2M7 19L20 6M14 19L22 10" fill="#fff" stroke="#0f7fe0" stroke-width="1.400"/></svg>
   <svg width="23" height="23"><path fill="#323130" d="M5 10H7.500V12.500H5ZM10 10H12.500V12.500H10ZM15 10H17.500V12.500H15Z"/></svg>
  </div>
  <div style="border-top:1px solid #d8d8d8;font-size:14.200px">
   <div style="padding:11px 0 0 15px;height:38px">Values</div>
   <div class="drop d-flex align-items-center" style="height:35px;padding-left:13px">Add data fields here</div>
   <div style="padding:13px 0 0 15px;height:39px;font-weight:600;letter-spacing:-.1px">Drill through</div>
   <div class="d-flex align-items-center justify-content-between" style="padding-left:15px;height:33px">Cross-report<span class="tog d-flex align-items-center justify-content-center" style="border:1px solid #616161;color:#616161;gap:3px"><i style="background:#616161"></i>Off</span></div>
   <div class="d-flex align-items-center justify-content-between" style="padding-left:15px;height:34px">Keep all filters<span class="tog d-flex align-items-center justify-content-center text-white" style="background:var(--green);gap:4px">On<i class="bg-white"></i></span></div>
   <div class="drop d-flex align-items-center bg-white" style="height:32px;padding-left:10px;margin-top:5px">Add drill-through fields here</div>
  </div>
 </aside>

 <aside class="data-pane">
  <div class="d-flex align-items-center justify-content-between" style="padding:12px 12px 0 10px"><span class="pane-h">Data</span><svg width="10" height="10"><use href="#collapse"/></svg></div>
  <div class="dsearch d-flex align-items-center"><svg width="18" height="18" viewBox="0 0 18 18"><circle class="gl" cx="7.500" cy="7" r="6.300" style="stroke-width:1.400"/><path class="gl" style="stroke-width:1.400" d="M12 11.500L17.500 17"/></svg>Search</div>
  <div class="trow d-flex align-items-center"><svg width="15" height="10"><use href="#expand"/></svg><svg width="18" height="18"><use href="#tblc"/></svg><span class="nm">Date Table</span></div>
  <div class="trow d-flex align-items-center"><svg width="15" height="10"><use href="#expand"/></svg><svg width="18" height="18"><use href="#tbl" y="1"/></svg><span class="nm">financial_loan</span></div>
  <div class="trow d-flex align-items-center"><svg width="15" height="10"><use href="#expand"/></svg><svg width="18" height="18"><use href="#tblc"/></svg><span class="nm">Select Measure</span></div>
 </aside>
</main>

<footer class="status d-flex align-items-center">
 <span style="padding:2px 0 0 5px;width:1415px">Page 3 of 3</span>
 <svg width="154" height="16" viewBox="0 0 154 16"><path d="M1 8.500H6" stroke="#323130" stroke-width="2"/><path d="M12 8.500H137M74.500 5V12" stroke="#484644" stroke-width="1.200"/><rect x="62" y="2.500" width="5" height="13" fill="#3b3a39"/><path d="M143.500 8.500H153.500M148.500 3.500V13.500" stroke="#323130" stroke-width="1.700"/></svg>
 <span style="width:54px;margin-left:16px;font-size:14px">86%</span>
 <svg width="18" height="14" viewBox="0 0 18 14" style="margin-top:2px"><rect class="k" x=".7" y="1" width="16.500" height="12" rx="1.500"/><path class="k" style="stroke-width:1.200" d="M4 5.500V4H6.500M11.500 4H14V5.500M4 8.500V10H6.500M11.500 10H14V8.500"/></svg>
 <span style="margin-left:18px;padding-top:2px">Update available (click to download)</span>
</footer>
<div class="bottomline"></div>

<script>
const loans = `55742|credit card|RENT|B|B5|08 May 2021|$7,000|0.11|228.22|$8,216
57245|Debt consolidation|OWN|C|C2|10 March 2021|$1,200|0.13|40.50|$1,458
65426|car|MORTGAGE|B|B1|09 August 2021|$4,000|0.11|131.22|$2,755
65640|home improvement|MORTGAGE|C|C2|08 May 2021|$5,000|0.11|87.19|$3,154
66964|Debt consolidation|MORTGAGE|D|D3|08 June 2021|$7,500|0.13|253.58|$9,129
68163|small business|MORTGAGE|A|A3|10 February 2021|$3,000|0.07|92.82|$3,342
68381|Debt consolidation|RENT|A|A5|08 March 2021|$6,625|0.09|209.54|$7,542
68817|major purchase|MORTGAGE|C|C1|08 March 2021|$10,000|0.11|327.53|$11,709
68926|moving|RENT|D|D2|08 August 2021|$2,300|0.13|77.69|$2,797
69168|major purchase|RENT|E|E4|08 April 2021|$5,000|0.15|173.65|$6,251
69251|other|MORTGAGE|A|A3|08 May 2021|$6,000|0.08|188.02|$6,784
69828|other|OWN|A|A5|08 March 2021|$15,000|0.09|474.42|$17,208
69924|credit card|RENT|D|D4|08 March 2021|$10,000|0.14|339.60|$12,225
76597|other|MORTGAGE|B|B2|07 July 2021|$5,000|0.09|159.03|$5,725
84918|other|MORTGAGE|A|A2|07 September 2021|$5,000|0.07|155.38|$5,200
87023|Debt consolidation|OWN|E|E2|07 June 2021|$7,500|0.14|255.43|$9,195
88854|house|RENT|A|A2|07 August 2021|$5,000|0.07|155.38|$5,174
90376|other|MORTGAGE|A|A2|07 July 2021|$5,000|0.07|155.38|$5,174
90395|Debt consolidation|MORTGAGE|A|A4|07 July 2021|$5,000|0.08|156.84|$5,272
90665|credit card|RENT|C|C1|07 July 2021|$8,500|0.10|275.38|$9,913`;
const numeric = [0, 6, 7, 8, 9];
document.getElementById('loanRows').innerHTML = loans.split('\n').map(line =>
  '<tr>' + line.split('|').map((v, i) => `<td${numeric.includes(i) ? ' class="n"' : ''}>${v}</td>`).join('') + '</tr>').join('');
</script>
<script src="https://cdn.jsdelivr.net/npm/bootstrap@5.3.0/dist/js/bootstrap.bundle.min.js"></script>
</body>
</html>
